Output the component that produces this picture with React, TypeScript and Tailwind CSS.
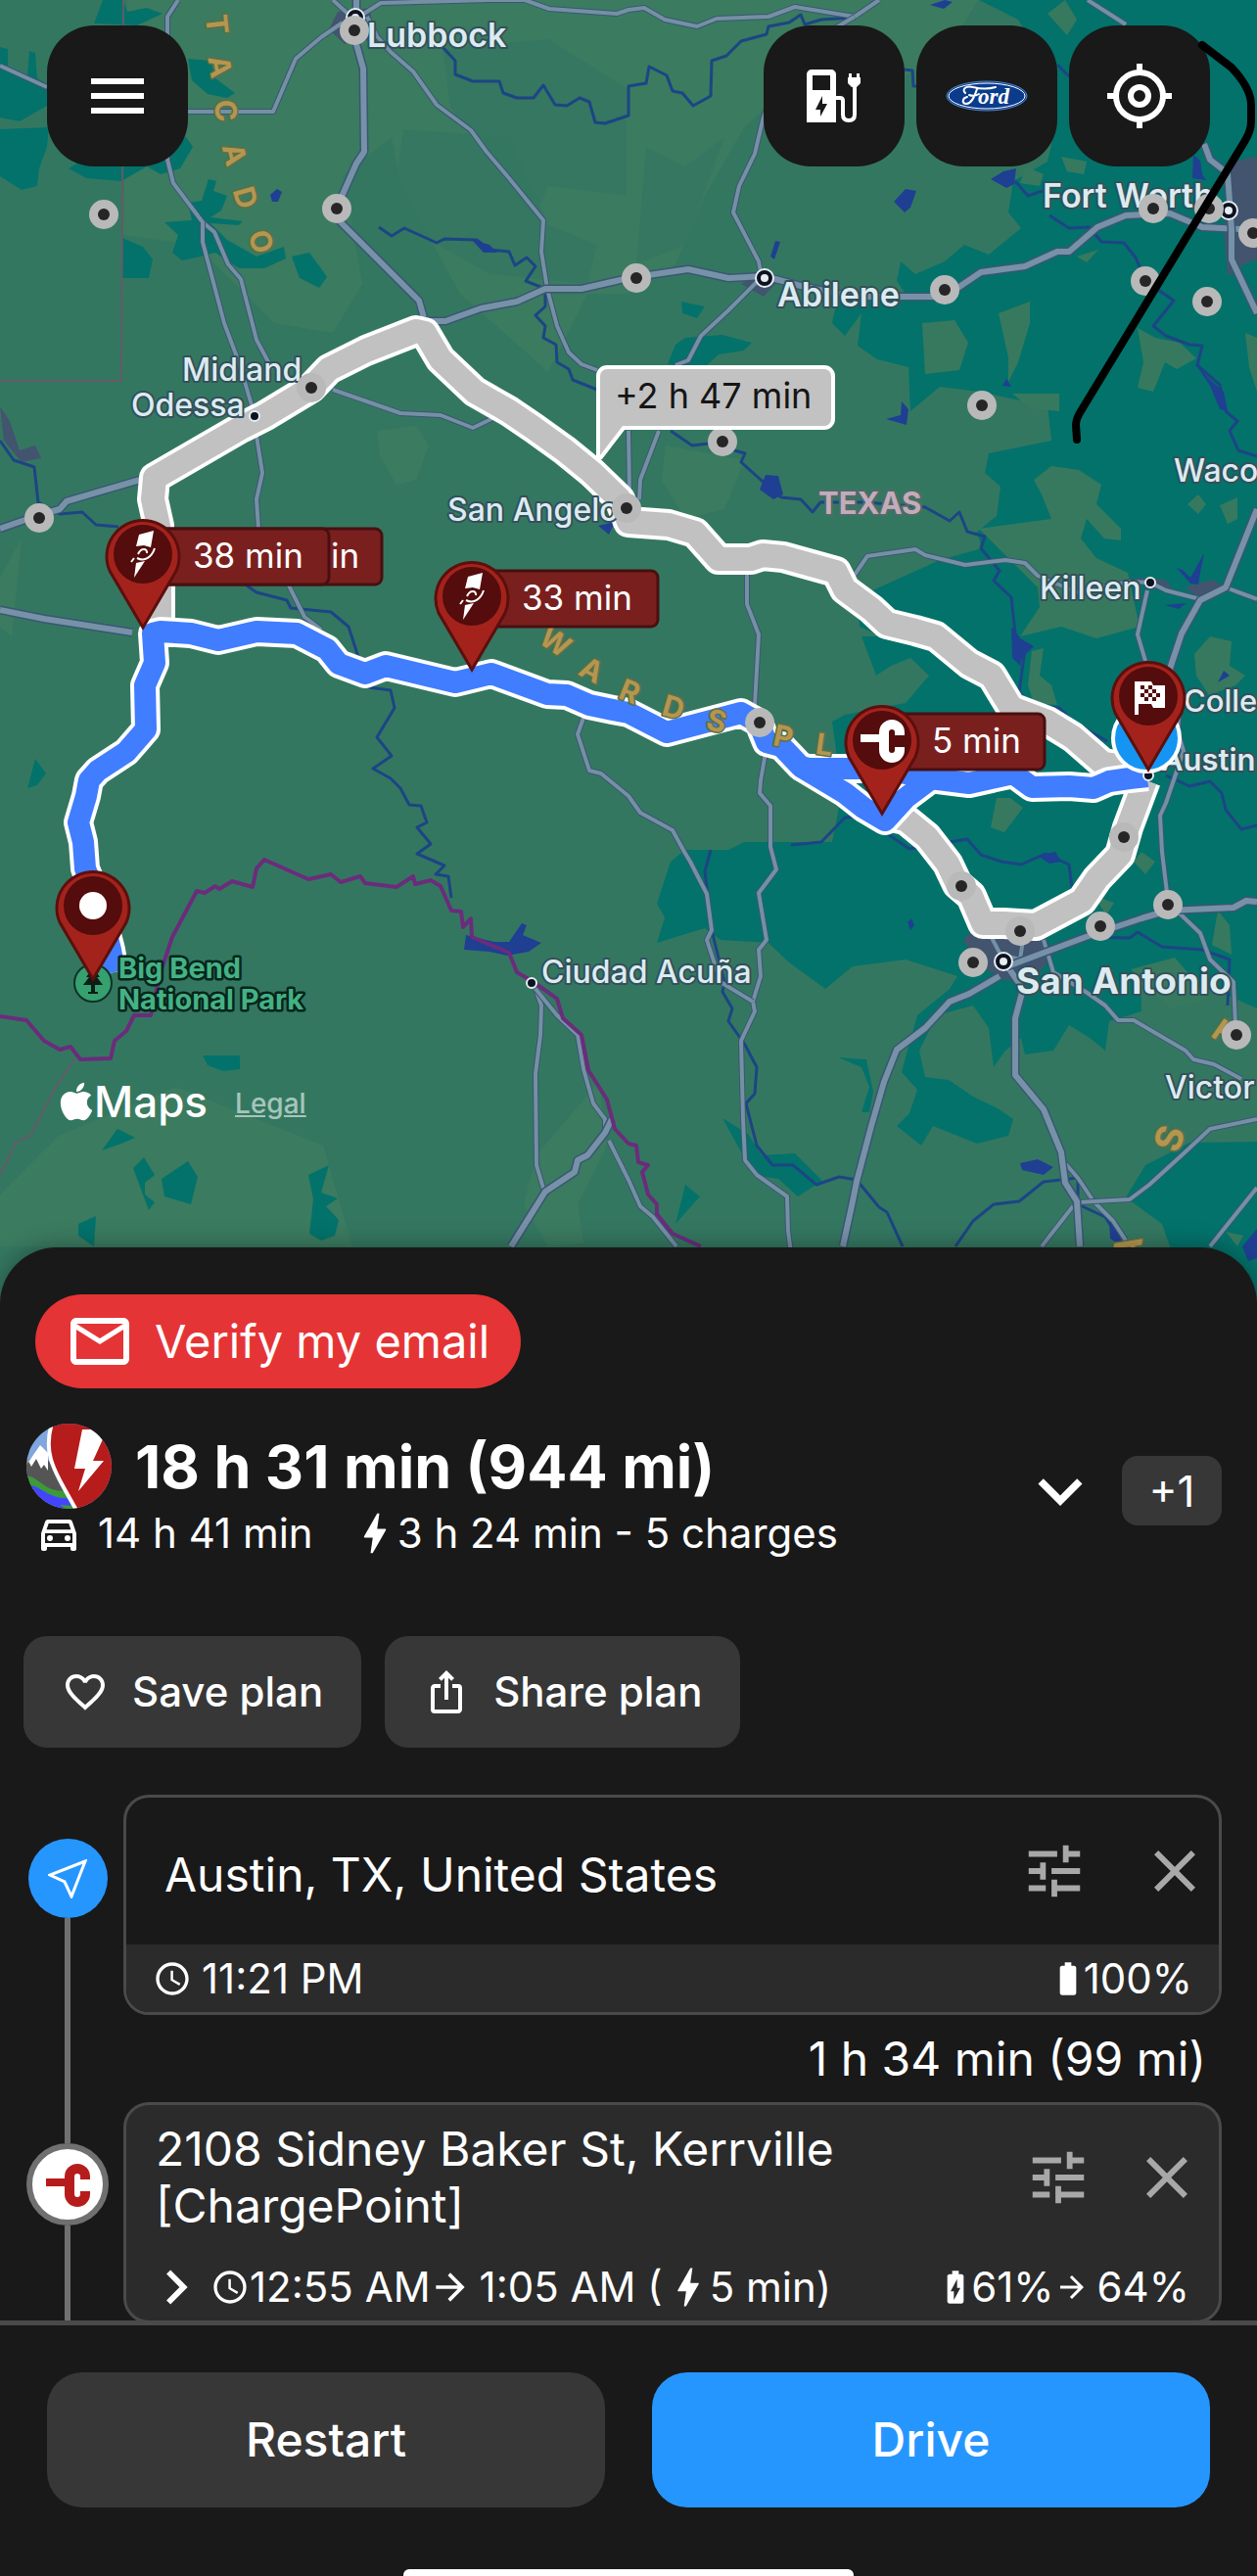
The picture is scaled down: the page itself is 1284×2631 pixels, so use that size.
import type { ReactNode } from "react";
import {
  MdArrowForward,
  MdBatteryChargingFull,
  MdBatteryFull,
  MdBolt,
  MdChevronRight,
  MdClose,
  MdExpandMore,
  MdFavoriteBorder,
  MdIosShare,
  MdMailOutline,
  MdMenu,
  MdOutlineDirectionsCar,
  MdSchedule,
  MdTune,
} from "react-icons/md";
import { FaApple } from "react-icons/fa";

/* ---------- Map data ---------- */

const lightLand = [
  "130,0 1000,0 960,60 900,90 840,60 760,130 720,200 690,270 640,300 600,300 560,380 470,300 410,190 400,140 350,180 370,290 340,340 280,330 200,250 126,240",
  "385,440 425,435 438,455 425,490 405,495 388,465",
  "680,455 760,470 740,520 700,530 676,490",
  "0,590 22,550 12,650 0,640",
  "548,1180 612,1105 620,1170 590,1230 596,1270 560,1273 535,1230",
  "60,1160 180,1110 330,1170 360,1273 0,1273 0,1220",
];

const darkLand = [
  "452,50 560,40 640,90 640,200 560,190 545,225 500,160 460,110",
  "412,132 520,140 560,230 610,250 600,290 500,280 430,240 405,180",
  "660,150 700,170 740,140 700,250 650,270",
  "800,175 1000,190 960,280 830,290 790,230",
];

const teal = [
  "1000,0 1284,0 1284,1030 1240,1010 1195,1020 1165,1000 1166,1033 1133,1043 1129,1073 1113,1060 1092,1047 1076,1073 1047,1077 1043,1060 1027,1073 1015,1090 1010,1050 994,1027 957,1037 939,1073 945,1100 969,1103 994,1120 1019,1132 1035,1143 1030,1160 998,1168 953,1150 941,1170 916,1150 929,1137 937,1113 921,1095 925,1080 937,1037 970,1010 978,997 925,980 871,987 843,1010 806,983 785,963 736,960 720,948 671,963 679,937 671,923 685,880 700,868 744,868 760,860 850,860 860,810 850,737 863,730 925,718 949,690 930,672 910,680 895,690 880,650 900,650 878,640 876,610 920,590 960,572 1003,560 998,543 1018,527 1022,497 1006,483 1010,463 1074,450 1070,415 1000,400 960,395 930,420 928,375 896,367 876,353 880,320 863,343 850,330 855,307 925,300 916,287 920,267 935,280 965,267 985,250 1010,260 1043,233 1030,217 1035,185 1070,165 1078,130 1070,70 1040,20",
  "1215,1167 1170,1190 1150,1223 1187,1250 1195,1273 1195,1336 1284,1336 1284,1166",
  "126,0 130,12 150,8 166,14 140,26 96,24 105,0",
  "0,48 8,50 8,72 28,78 30,52 36,54 38,80 48,86 48,108 20,124 0,120",
  "0,132 50,130 48,150 40,172 38,190 22,194 0,180",
  "192,60 215,62 220,80 240,95 232,100 212,96 196,82",
  "190,140 197,150 184,172 164,178 150,170 124,185 88,182 70,172 90,160 124,165",
  "168,227 196,225 192,207 206,205 213,183 221,185 218,195 232,200 226,215 215,222 248,226 244,230 215,228 232,245 262,262 290,252 292,264 270,274 244,274 220,258 196,264 186,266 176,258 182,240",
  "125,243 146,252 156,265 152,284 125,284",
  "298,262 316,258 330,277 334,283 326,294 306,284",
  "28,805 36,775 47,790 38,802",
  "207,1078 245,1078 245,1092 228,1094 212,1088",
  "104,1175 120,1153 138,1162 124,1168",
  "136,1193 147,1182 158,1200 148,1208 148,1220 158,1228 152,1236",
  "165,1204 192,1186 202,1202 195,1230 168,1222",
  "315,1200 336,1190 332,1204 328,1218 345,1224 333,1232 346,1246 342,1262 328,1267 316,1260 320,1225",
  "80,1250 98,1242 96,1273 80,1262",
  "856,1080 885,1082 892,1115 888,1136 880,1136 888,1110 880,1090",
  "738,1142 764,1158 778,1180 812,1178 840,1206 815,1222 795,1204 770,1200",
  "700,1210 715,1222 690,1250",
  "696,308 720,313 712,325 697,320",
  "700,345 738,342 768,350 760,358 734,362 720,375 682,372 690,352",
];

const patches = [
  "942,330 975,327 989,350 980,378 945,382",
  "1020,320 1052,308 1052,330 1040,370 1030,390 1030,365",
  "1088,0 1100,20 1090,36 1070,14",
  "1048,170 1066,178 1062,190 1042,187",
  "1084,160 1110,165 1107,178 1090,175",
  "1100,262 1122,255 1110,268",
  "1162,335 1180,345 1205,350 1222,366 1202,377 1190,370 1178,400 1162,396 1168,370",
  "1034,402 1082,402 1082,420 1052,417",
  "1074,476 1102,480 1125,495 1120,515 1145,540 1145,552 1128,550 1110,530 1104,550 1120,570 1152,585 1164,640 1120,652 1084,640 1042,650 1062,620 1060,600 1030,570 1000,540 1074,530 1064,505 1056,490",
  "1213,515 1224,505 1232,515 1224,525",
  "1246,516 1264,508 1264,530 1254,535",
  "1054,665 1066,662 1062,690 1074,700 1080,720 1056,718 1050,700",
  "1220,668 1236,650 1258,655 1256,680 1272,690 1262,700 1235,710 1222,690",
  "1018,815 1032,815 1045,825 1026,850 1012,845",
  "1166,870 1180,880 1170,893 1158,880",
  "1118,915 1138,922 1130,935",
  "1244,930 1256,945 1258,975 1238,965",
  "1272,340 1284,345 1284,400 1276,375",
  "1155,990 1200,978 1236,1020 1195,1030",
  "1252,1258 1270,1262 1264,1273",
];

const urban = [
  "1256,165 1284,160 1284,265 1270,270 1262,280 1254,280 1250,235",
  "984,960 998,945 1066,953 1076,975 1052,1005 1024,1000 1000,985",
  "345,12 378,8 382,40 352,45 336,30",
  "757,290 781,278 792,290 780,303",
  "0,415 10,430 20,460 36,455 42,468 22,472 4,450",
  "1210,600 1238,592 1252,600 1232,615",
  "1160,590 1190,592 1198,602 1172,602",
];

const lakes = [
  "276,199 283,193 288,196 284,206 278,206",
  "482,245 500,250 508,258 494,258",
  "913,206 925,193 936,195 930,212 924,217",
  "787,262 792,246 797,247 791,265",
  "1012,183 1025,175 1038,172 1036,188 1028,192",
  "1219,158 1226,164 1228,178 1232,184 1218,182",
  "905,428 920,424 921,410 928,418 926,434",
  "1024,394 1028,387 1033,395",
  "950,5 965,0 973,2 964,9",
  "776,500 782,485 795,486 800,505 790,510",
  "1033,640 1042,652 1056,660 1044,672 1042,680 1034,672",
  "1202,580 1208,582 1216,590 1230,565 1226,585 1224,597 1216,596",
  "1190,618 1212,616 1204,622",
  "1244,697 1250,685 1256,690",
  "474,970 476,955 505,962 520,962 533,943 538,945 534,955 553,963 540,972 518,976 500,972",
  "1042,1188 1060,1184 1076,1192 1066,1200 1044,1195",
  "927,942 931,938 934,945 930,950",
  "1060,874 1078,870 1084,880 1072,882",
  "611,537 628,533 622,546",
  "1133,1243 1142,1250 1146,1273 1134,1265",
  "1220,370 1236,388 1250,400 1254,420 1246,418 1236,394",
  "1269,1273 1284,1255 1284,1285 1275,1288",
];

const rivers = [
  "452,48 465,62 465,76 483,83 510,83 514,95 528,100 545,100 555,87 567,107 579,108 592,100 602,104 608,125 618,126 642,118 642,88 660,85 663,68 681,77 687,93 697,95 708,108 726,98 727,62 742,57 757,42 783,35 785,27 806,23 818,15 822,25 839,20 871,18",
  "387,232 400,241 413,233 446,248 454,244 487,245 500,255 520,257 526,271 538,263 547,272 537,287 557,295 557,313 547,322 557,333 555,345 568,352 569,370 581,377 585,388 610,398",
  "685,440 707,455 724,453 761,463 757,472 777,490 798,508 818,510 830,523 838,513 884,513 945,518 970,532 980,523 988,543 1006,548 1002,560 1021,583 1015,593 1033,610 1037,647 1047,663 1041,707 1051,720 1082,723 1096,737 1113,747 1131,757",
  "1191,792 1215,803 1236,798 1248,810 1252,827 1268,847 1284,843",
  "1072,220 1092,233 1113,232 1125,247 1148,248 1160,263 1170,287 1199,307 1178,333 1191,343 1215,352 1228,353 1223,373 1246,393 1252,420 1264,430 1256,440 1265,460 1284,466",
  "0,450 14,470 35,477 39,513 61,525 84,523 98,536 121,538",
  "252,598 262,605 293,613 297,621 338,625 356,640 365,668 377,702 399,705 403,723 385,753 400,772 381,785 399,795 409,805 418,822 430,823 436,840 426,845 440,862 426,872 454,884 445,893 458,895 461,917",
  "726,868 720,890 727,950 740,1003 738,1013 748,1030 744,1043 761,1067 773,1090 771,1117 762,1127 773,1170 789,1190 810,1190 834,1210 857,1202 875,1205 898,1233 906,1238 922,1273",
  "976,1273 994,1247 1015,1230 1041,1227 1066,1207 1101,1203 1101,1230 1129,1243 1146,1270",
  "904,850 929,867 988,857 1002,873 1023,880 1043,883 1068,872 1092,883 1095,907",
  "1109,957 1154,958 1162,952 1187,967 1228,970 1256,980 1254,1027",
  "808,863 839,860 863,835 888,833",
  "924,71 932,72 933,88 940,88",
  "1080,66 1092,78",
  "1037,185 1050,200 1080,190",
];

const majorRoads = [
  "364,0 364,45 371,70 372,155 364,167 348,203 348,227 428,307 434,328",
  "434,328 455,328 491,315 528,308 557,295 594,295 642,284 703,275 744,284 781,282 818,292 871,303 965,303 1002,278 1047,272 1080,257 1092,257 1121,232 1150,220 1195,218 1228,232 1284,235",
  "1284,520 1252,600 1226,613 1207,647 1195,683 1205,720",
  "1021,997 990,1015 970,1023 945,1050 916,1072 903,1105 890,1150 875,1207 871,1227 861,1273",
  "1029,987 1045,1010 1037,1040 1037,1098 1066,1133 1084,1177 1088,1208 1100,1227 1103,1273",
  "1029,987 1109,957 1166,938 1193,930 1260,927 1273,920 1284,921",
  "0,540 37,527 61,520 68,512 143,490",
  "0,623 45,632 135,646",
  "625,1143 618,1157 600,1180 590,1185 587,1197 557,1217 522,1273",
  "1230,147 1236,163 1254,177 1258,235 1258,265 1284,320",
];

const minorRoads = [
  "182,0 171,17 171,163 177,187 207,227 219,237 233,270 246,285 262,347 278,377",
  "207,227 207,247 229,330 244,370 258,417",
  "192,114 279,114 302,60 328,38 350,23",
  "0,67 48,89",
  "375,17 385,37 399,53 422,73 446,107 481,133 497,155 520,182 555,225 553,257 559,295 569,333 581,360 594,372 610,378",
  "340,0 362,20 389,3 500,0 536,0 561,9 630,14 642,10 658,8 679,20 712,27 732,19 785,17 812,7 873,17 898,0",
  "873,17 800,60 779,123 771,157 755,190 749,217 775,267 778,283 744,317 716,343 703,368 690,373",
  "1111,0 1150,25",
  "1205,720 1203,747 1209,767 1191,820 1185,833 1187,870 1193,920",
  "1226,612 1191,603 1175,595 1154,594 1100,605 1060,588 1047,575 1027,572 986,577 945,567 935,561 886,568 873,587",
  "1172,603 1162,648 1170,675",
  "1252,600 1284,612",
  "763,585 763,617 775,648 771,720 783,763 777,797 776,810 787,823 787,865 793,888 775,912 783,960 775,970 777,997 769,1023 771,1033 757,1063 759,1143 761,1185 773,1200 804,1222 805,1257 808,1280",
  "596,733 590,750 602,787 614,790 642,813 654,830 687,848 699,870 705,880 722,913 727,950 722,960 736,1003 769,1023",
  "1088,1188 1101,1203 1117,1227 1137,1247 1150,1267",
  "1101,1228 1154,1225 1174,1210 1207,1180 1236,1153 1284,1143",
  "1096,1232 1064,1273",
  "1284,1213 1236,1273",
  "1205,933 1226,953 1236,980 1260,1003 1262,1047",
  "1066,960 1076,993 1109,1013 1129,1027 1142,1042 1158,1042 1211,1073 1219,1082 1240,1087 1268,1102",
  "262,445 268,483 262,510 264,540 295,598 311,630 328,643",
  "340,398 389,415 409,422 450,424 483,437 508,425",
  "642,440 643,505",
  "673,440 654,490 653,510",
  "547,1010 553,1027 552,1057 547,1097 548,1190 556,1217",
  "547,1010 569,1037 590,1057 596,1092 606,1127 618,1143 618,1157",
  "622,1165 642,1205 654,1232 667,1243 691,1273",
  "1009,950 1022,975 1042,980 1045,960",
];

const nationalBorder =
  "0,1038 27,1042 45,1063 61,1072 72,1069 82,1082 113,1081 117,1063 129,1053 137,1037 154,1037 164,993 176,957 201,910 209,912 220,905 224,908 237,900 258,906 262,887 270,878 315,898 338,893 348,901 368,895 373,902 405,906 422,895 424,903 440,899 450,905 461,930 471,931 473,947 481,938 482,957 520,973 528,993 545,1003 569,1020 575,1040 594,1057 601,1093 620,1123 628,1153 642,1168 650,1170 652,1187 662,1190 656,1197 662,1220 671,1230 671,1240 687,1260 716,1273";

const altRoutes = [
  "163,640 163,600 162,537 156,510 158,488 246,437 270,425 318,396 336,377 374,358 425,338 434,340 450,367 485,400 520,420 545,437 577,460 604,482 633,510 642,533 683,536 710,544 734,571 767,571 779,567 800,569 854,584 863,602 890,622 906,637 935,644 956,650 990,678 1013,690 1033,723 1070,737 1096,753 1127,780 1170,786",
  "901,832 925,837 947,855 968,882 978,903 992,915 1004,943 1025,943 1058,945 1105,920 1121,897 1144,873 1152,845 1170,797",
];

const mainRoutes = [
  "117,993 113,970 100,920 87,887 85,860 80,840 88,813 91,797 100,787 129,768 149,745 148,700 158,677 156,647 164,645 195,647 223,654 262,645 303,647 334,663 346,678 373,688 394,680 465,697 502,688 559,709 579,710 602,720 626,725 642,728 681,748 757,728 775,738 783,758 798,762 818,783 826,785 900,785 950,795 990,800 1035,790 1054,804 1092,803 1117,805 1133,798 1154,795 1172,793",
  "818,783 863,810 882,825 904,838 925,815 949,797",
];

const chargers: [number, number][] = [
  [362, 31], [106, 219], [344, 213], [318, 396], [650, 284], [965, 296], [1178, 213], [1235, 213],
  [1280, 238], [1170, 287], [1233, 308], [1003, 414], [738, 451], [40, 529], [640, 519], [776, 738],
  [1148, 855], [982, 905], [1042, 951], [994, 983], [1124, 946], [1193, 924], [1263, 1057],
];

const townDots: [number, number][] = [[260, 425], [1175, 595], [543, 1004], [1173, 792]];
const cityDots: [number, number][] = [[363, 18], [781, 284], [1255, 215], [1025, 982]];

const placeNames: { name: string; x: number; y: number; size: number; weight: number }[] = [
  { name: "Lubbock", x: 375, y: 48, size: 34, weight: 600 },
  { name: "Midland", x: 186, y: 389, size: 32, weight: 500 },
  { name: "Odessa", x: 134, y: 425, size: 32, weight: 500 },
  { name: "Abilene", x: 794, y: 313, size: 34, weight: 600 },
  { name: "Fort Worth", x: 1065, y: 212, size: 34, weight: 600 },
  { name: "Waco", x: 1199, y: 492, size: 32, weight: 500 },
  { name: "Killeen", x: 1062, y: 612, size: 32, weight: 500 },
  { name: "Colle", x: 1209, y: 727, size: 31, weight: 500 },
  { name: "Austin", x: 1186, y: 787, size: 31, weight: 600 },
  { name: "San Angelo", x: 457, y: 532, size: 32, weight: 500 },
  { name: "Ciudad Acuña", x: 553, y: 1004, size: 32, weight: 500 },
  { name: "San Antonio", x: 1038, y: 1015, size: 37, weight: 700 },
  { name: "Victor", x: 1190, y: 1122, size: 32, weight: 500 },
];

const regionLetters: [string, number, number, number][] = [
  ["T", 221, 25, 84], ["A", 224, 68, 80], ["C", 230, 113, 82], ["A", 239, 158, 76], ["D", 250, 202, 74], ["O", 266, 247, 72],
  ["W", 567, 656, 34], ["A", 604, 685, 28], ["R", 643, 707, 22], ["D", 688, 723, 16], ["S", 732, 737, 14], ["P", 800, 753, 12], ["L", 842, 761, 8],
];

const coastLetters: [string, number, number, number][] = [
  ["S", 1195, 1163, -72], ["T", 1256, 1058, -55], ["A", 1152, 1276, -80],
];

/* ---------- Map parts ---------- */

function ChargePointMark({ color }: { color: string }) {
  return (
    <g fill="none" stroke={color}>
      <path strokeWidth="8" d="M-22-2H-2" />
      <path strokeWidth="10" d="M18-5V-8A8 8 0 0 0 2-8V10A8 8 0 0 0 18 10V7" />
    </g>
  );
}

function ChargerBolt() {
  return (
    <g fill="#fff">
      <path d="M-4-20 11-24 8-7 1-9-7-8Z" />
      <path d="M-7 9 2 7-9 24Z" />
      <path fill="none" stroke="#fff" strokeWidth="2" d="M-9 4-12 8M-5 0C-2-7 5-6 4-1M-6 4C2 8 9 3 12-6" />
    </g>
  );
}

function Pin({ x, y, children }: { x: number; y: number; children: ReactNode }) {
  return (
    <g transform={`translate(${x} ${y})`}>
      <path fill="#a3231c" stroke="#5c0f0d" strokeWidth="3" d="M0 75-34 17A37 37 0 1 1 34 17Z" />
      <circle r="30" fill="#540c0c" />
      {children}
    </g>
  );
}

function TimeTag({ x, y, width, label, labelX }: { x: number; y: number; width: number; label: string; labelX: number }) {
  return (
    <g>
      <rect x={x} y={y} width={width} height="57" rx="7" fill="#79201f" stroke="#490f10" strokeWidth="3" />
      <text x={labelX} y={y + 40} fontSize="35" fill="#fff">
        {label}
      </text>
    </g>
  );
}

function RouteMap() {
  return (
    <svg
      className="absolute inset-0 h-full w-full font-[Inter,sans-serif]"
      viewBox="0 0 1284 1336"
      preserveAspectRatio="xMidYMin slice"
      role="img"
      aria-label="Route map from Austin to Big Bend National Park"
    >
      <rect width="1284" height="1336" fill="#347761" />
      {lightLand.map((p) => (
        <polygon key={p} points={p} fill="#3f7d60" opacity="0.7" />
      ))}
      {darkLand.map((p) => (
        <polygon key={p} points={p} fill="#347761" opacity="0.8" />
      ))}
      {teal.map((p) => (
        <polygon key={p} points={p} fill="#03726b" />
      ))}
      {patches.map((p) => (
        <polygon key={p} points={p} fill="#37795f" />
      ))}
      {urban.map((p) => (
        <polygon key={p} points={p} fill="#43546f" />
      ))}
      <g fill="none" stroke="#1c4585" strokeWidth="3" strokeLinejoin="round">
        {rivers.map((p) => (
          <polyline key={p} points={p} />
        ))}
      </g>
      {lakes.map((p) => (
        <polygon key={p} points={p} fill="#1f3f92" />
      ))}
      <polyline points="126,0 124,389 0,389" fill="none" stroke="#655a67" strokeWidth="2" />
      <polyline points="76,1082 57,1110 31,1160 16,1167 0,1200" fill="none" stroke="#655a67" strokeWidth="2" />
      <g fill="none" strokeLinejoin="round">
        {minorRoads.map((p) => (
          <g key={p}>
            <polyline points={p} stroke="#3a5676" strokeWidth="6" />
            <polyline points={p} stroke="#7590a3" strokeWidth="4" />
          </g>
        ))}
        {majorRoads.map((p) => (
          <g key={p}>
            <polyline points={p} stroke="#3a5676" strokeWidth="9" />
            <polyline points={p} stroke="#7791a6" strokeWidth="6" />
          </g>
        ))}
        <polyline points={nationalBorder} stroke="#6b2c7c" strokeWidth="4" />
      </g>

      <g fill="none" strokeLinejoin="round">
        {altRoutes.map((p) => (
          <polyline key={p} points={p} stroke="#fff" strokeWidth="32" />
        ))}
        {altRoutes.map((p) => (
          <polyline key={p} points={p} stroke="#c1c1c1" strokeWidth="24" />
        ))}
        {mainRoutes.map((p) => (
          <polyline key={p} points={p} stroke="#fff" strokeWidth="30" />
        ))}
        {mainRoutes.map((p) => (
          <polyline key={p} points={p} stroke="#407dff" strokeWidth="22" />
        ))}
      </g>

      <g fontWeight="700" fill="#b5964f" textAnchor="middle" stroke="#5d6f47" strokeWidth="3" strokeLinejoin="round" paintOrder="stroke">
        {regionLetters.map(([letter, x, y, angle]) => (
          <text key={`${letter}${x}`} x="0" y="10" fontSize="30" transform={`translate(${x} ${y}) rotate(${angle})`}>
            {letter}
          </text>
        ))}
        {coastLetters.map(([letter, x, y, angle]) => (
          <text key={`${letter}${x}`} x="0" y="13" fontSize="38" transform={`translate(${x} ${y}) rotate(${angle})`}>
            {letter}
          </text>
        ))}
      </g>

      {cityDots.map(([x, y]) => (
        <g key={`${x}-${y}`}>
          <circle cx={x} cy={y} r="9" fill="#0c1220" stroke="#e6ecf0" strokeWidth="2" />
          <circle cx={x} cy={y} r="4" fill="#e6ecf0" />
        </g>
      ))}
      {townDots.map(([x, y]) => (
        <circle key={`${x}-${y}`} cx={x} cy={y} r="5" fill="#0c1220" stroke="#e6ecf0" strokeWidth="2" />
      ))}

      <g stroke="#33505a" strokeWidth="4" strokeLinejoin="round" paintOrder="stroke" fill="#dcebf0">
        {placeNames.map((p) => (
          <text key={p.name} x={p.x} y={p.y} fontSize={p.size} fontWeight={p.weight}>
            {p.name}
          </text>
        ))}
        <text x="836" y="525" fontSize="31" fontWeight="700" fill="#c3abbb" stroke="#4f6c66">
          TEXAS
        </text>
      </g>

      {chargers.map(([x, y]) => (
        <g key={`${x}-${y}`}>
          <circle cx={x} cy={y} r="15" fill="#b9b9b9" />
          <circle cx={x} cy={y} r="6" fill="#262626" />
        </g>
      ))}

      <circle cx="95" cy="1004" r="19" fill="#36a06f" stroke="#0e3327" strokeWidth="2" />
      <path fill="#0b1d16" d="M95 988 102 998H99L105 1006H97V1013H100V1015H90V1013H93V1006H85L91 998H88Z" />
      <g fontSize="29" fontWeight="700" fill="#45b184" stroke="#06251c" strokeWidth="5" strokeLinejoin="round" paintOrder="stroke">
        <text x="121" y="999">Big Bend</text>
        <text x="121" y="1031">National Park</text>
      </g>

      <path
        d="M620 375H842A9 9 0 0 1 851 384V428A9 9 0 0 1 842 437H637L614 467 611 468V384A9 9 0 0 1 620 375Z"
        fill="#c2c2c2"
        stroke="#fff"
        strokeWidth="4"
      />
      <text x="628" y="417" fontSize="36" fill="#151515">
        +2 h 47 min
      </text>

      <circle cx="1171" cy="754" r="34" fill="#1595f3" stroke="#fff" strokeWidth="4" />

      <TimeTag x={160} y={540} width={230} label="in" labelX={338} />
      <TimeTag x={150} y={540} width={186} label="38 min" labelX={197} />
      <Pin x={146} y={566}>
        <ChargerBolt />
      </Pin>
      <TimeTag x={486} y={583} width={186} label="33 min" labelX={533} />
      <Pin x={482} y={609}>
        <ChargerBolt />
      </Pin>
      <TimeTag x={905} y={729} width={162} label="5 min" labelX={952} />
      <Pin x={901} y={756}>
        <ChargePointMark color="#fff" />
      </Pin>
      <Pin x={1173} y={711}>
        <path fill="#fff" d="M-14-15H3L5-11H17V12H5L3 8H-10V19H-14Z" />
        <path
          fill="#540c0c"
          d="M-8-11h4v4h-4zM0-11h4v4h-4zM-4-7h4v4h-4zM4-7h4v4h-4zM-8-3h4v4h-4zM0-3h4v4h-4zM8-3h4v4h-4zM4 1h4v4h-4zM-4 1h4v4h-4z"
        />
      </Pin>
      <Pin x={95} y={925}>
        <circle r="14" fill="#fff" />
      </Pin>
    </svg>
  );
}

/* ---------- Icons ---------- */

function ChargingStationIcon() {
  return (
    <svg viewBox="0 0 56 56" className="size-14" aria-hidden="true">
      <path
        fill="#fff"
        fillRule="evenodd"
        d="M5 1H25A5 5 0 0 1 30 6V55H0V6A5 5 0 0 1 5 1ZM6 7V22H24V7ZM16 28 9 42H14V49L21 36H16Z"
      />
      <path fill="none" stroke="#fff" strokeWidth="4" d="M29 30H34Q37 30 37 33V47Q37 53 43 53T49 47V16" />
      <path fill="#fff" d="M43 5H46V9H51V5H54V9H55V15L51 19H46L42 15V9H43Z" />
    </svg>
  );
}

function LocateIcon() {
  return (
    <svg viewBox="0 0 66 66" className="size-[66px]" fill="none" stroke="#fff" aria-hidden="true">
      <circle cx="33" cy="33" r="24" strokeWidth="6" />
      <circle cx="33" cy="33" r="9" strokeWidth="6" />
      <path strokeWidth="6" d="M33 0V9M33 57V66M0 33H9M57 33H66" />
    </svg>
  );
}

function FordBadge() {
  return (
    <svg viewBox="0 0 84 32" className="h-8 w-21" aria-hidden="true">
      <ellipse cx="42" cy="16" rx="41" ry="15" fill="#0b3c8c" stroke="#4f86c9" strokeWidth="1" />
      <ellipse cx="42" cy="16" rx="39" ry="13" fill="#0b3c8c" stroke="#fff" strokeWidth="1" />
      <path
        fill="none"
        stroke="#fff"
        strokeWidth="2"
        strokeLinecap="round"
        d="M20 13C16 9 21 5 28 7C36 9 44 9 51 7M32 9C30 15 27 24 21 24C16 24 17 18 22 17M24 15Q29 17 34 14"
      />
      <text x="33" y="24" fontSize="23" fontStyle="italic" fontWeight="700" fill="#fff" className="font-['Liberation_Serif',serif]">
        ord
      </text>
    </svg>
  );
}

function PlannerLogo() {
  return (
    <svg viewBox="0 0 87 87" className="size-[87px] shrink-0 rounded-full" aria-hidden="true">
      <rect width="87" height="87" fill="#7fa6de" />
      <path fill="#555" d="M0 40 14 26 24 40 50 87H0Z" />
      <path fill="#fff" d="M0 42 14 22 22 30V48L18 42 15 46 10 36 5 44 2 38Z" />
      <path fill="#3c9a3a" d="M0 53C14 55 20 72 42 68L52 87H0Z" />
      <path fill="#4444ff" d="M0 63C16 62 20 78 46 76L52 84 34 83 40 87H0Z" />
      <path fill="#b71c1c" stroke="#fff" strokeWidth="4" d="M27-4C16 30 26 44 52 90L100 90V-4Z" />
      <path fill="#fff" d="M57 6H70L78 16 68 38H79L53 69 60 46H49Z" />
    </svg>
  );
}

function NavigationIcon() {
  return (
    <svg viewBox="0 0 40 40" className="size-10" fill="none" stroke="#fff" strokeWidth="3" aria-hidden="true">
      <path d="M38 2 2 16 17 23 24 38Z" />
    </svg>
  );
}

/* ---------- Sheet parts ---------- */

function MapButton({ label, children }: { label: string; children: ReactNode }) {
  return (
    <button
      type="button"
      aria-label={label}
      className="flex size-36 items-center justify-center rounded-[48px] bg-[#191919] text-white"
    >
      {children}
    </button>
  );
}

function StopActions({ name }: { name: string }) {
  return (
    <>
      <button type="button" aria-label={`Settings for ${name}`}>
        <MdTune className="size-[70px]" />
      </button>
      <button type="button" aria-label={`Remove ${name}`}>
        <MdClose className="size-[72px]" />
      </button>
    </>
  );
}

export default function App() {
  return (
    <main className="flex min-h-screen flex-col bg-[#191919] font-[Inter,sans-serif] text-white">
      <section className="relative h-[1336px] overflow-hidden">
        <RouteMap />
        <header className="relative flex items-start justify-between px-12 pt-[26px]">
          <MapButton label="Menu">
            <MdMenu className="size-[72px]" />
          </MapButton>
          <div className="flex gap-3">
            <MapButton label="Charging stations">
              <ChargingStationIcon />
            </MapButton>
            <MapButton label="Ford vehicle">
              <FordBadge />
            </MapButton>
            <MapButton label="My location">
              <LocateIcon />
            </MapButton>
          </div>
        </header>
        <svg
          className="pointer-events-none absolute inset-0 h-full w-full"
          viewBox="0 0 1284 1336"
          preserveAspectRatio="xMidYMin slice"
          aria-hidden="true"
        >
          <path
            fill="none"
            stroke="#000"
            strokeWidth="8"
            strokeLinecap="round"
            strokeLinejoin="round"
            d="M1228 46 1258 69Q1278 90 1278 107V124Q1278 134 1271 145L1104 420Q1099 428 1099 434L1100 449"
          />
        </svg>
        <div className="absolute top-[1095px] left-14 flex items-center">
          <FaApple className="-mr-1 size-11" />
          <span className="text-[44px] leading-[56px] font-medium">Maps</span>
          <a href="#legal" className="ml-7 pt-1 text-[28px] leading-[56px] font-medium text-[#a5c6bb] underline">
            Legal
          </a>
        </div>
      </section>

      <section className="relative -mt-[62px] rounded-t-[58px] bg-[#191919] pt-12 shadow-[0_0_24px_rgba(0,0,0,0.35)]">
        <button
          type="button"
          className="ml-9 flex h-24 items-center gap-5 rounded-full bg-[#e53435] pr-8 pl-[30px] text-[47px] leading-[58px]"
        >
          <MdMailOutline className="size-[72px]" />
          Verify my email
        </button>

        <div className="mt-9 flex items-center justify-between pr-9 pl-[27px]">
          <div>
            <div className="flex items-center gap-6">
              <PlannerLogo />
              <h1 className="text-[61px] leading-[72px] font-bold">18 h 31 min (944 mi)</h1>
            </div>
            <div className="flex items-center pl-[9px] text-[42px] leading-[50px]">
              <MdOutlineDirectionsCar className="size-12" />
              <span className="ml-4">14 h 41 min</span>
              <MdBolt className="-mr-1 -my-1 ml-9 size-[54px]" />
              <span>3 h 24 min - 5 charges</span>
            </div>
          </div>
          <div className="flex items-center gap-[18px]">
            <button type="button" aria-label="Show plan details">
              <MdExpandMore className="size-[90px]" />
            </button>
            <button type="button" className="h-[71px] w-[102px] rounded-2xl bg-[#373737] text-[44px] leading-[50px]">
              +1
            </button>
          </div>
        </div>

        <div className="mt-20 flex gap-6 pl-6 text-[42px] leading-[50px] font-medium">
          <button type="button" className="flex h-[114px] items-center gap-6 rounded-3xl bg-[#373737] px-[39px]">
            <MdFavoriteBorder className="size-12" />
            Save plan
          </button>
          <button type="button" className="flex h-[114px] items-center gap-6 rounded-3xl bg-[#373737] px-[39px]">
            <MdIosShare className="size-12" />
            Share plan
          </button>
        </div>

        <ol className="mt-12 pr-9 pl-3">
          <li className="flex">
            <div className="flex w-[114px] shrink-0 flex-col items-center pt-[45px]">
              <span className="flex size-[81px] items-center justify-center rounded-full bg-[#2696ff]">
                <NavigationIcon />
              </span>
              <span className="w-[6px] flex-1 bg-[#707070]" />
            </div>
            <div className="min-w-0 flex-1">
              <article className="overflow-hidden rounded-[26px] border-[3px] border-[#4a4a4a]">
                <div className="flex h-[150px] items-center justify-between pr-[9px] pl-[39px]">
                  <h2 className="pt-2 text-[48px] leading-[58px]">Austin, TX, United States</h2>
                  <div className="flex shrink-0 items-center gap-[52px] text-[#a8a8a8]">
                    <StopActions name="Austin" />
                  </div>
                </div>
                <div className="flex items-center justify-between bg-[#2b2b2b] pt-[10px] pr-[27px] pb-[9px] pl-[27px] text-[42px] leading-[50px]">
                  <span className="flex items-center gap-[10px]">
                    <MdSchedule className="size-10" />
                    11:21 PM
                  </span>
                  <span className="flex items-center">
                    <MdBatteryFull className="-mr-1 size-10" />
                    100%
                  </span>
                </div>
              </article>
              <p className="pt-4 pr-4 pb-[15px] text-right text-[48px] leading-[58px]">1 h 34 min (99 mi)</p>
            </div>
          </li>

          <li className="flex">
            <div className="flex w-[114px] shrink-0 flex-col items-center">
              <span className="h-[42px] w-[6px] bg-[#707070]" />
              <span className="flex size-[84px] items-center justify-center rounded-full border-[6px] border-[#707070] bg-white">
                <svg viewBox="-25 -25 50 50" className="size-[50px]" aria-label="ChargePoint" role="img">
                  <ChargePointMark color="#b71c1c" />
                </svg>
              </span>
              <span className="w-[6px] flex-1 bg-[#707070]" />
            </div>
            <article className="min-w-0 flex-1 rounded-[26px] border-[3px] border-[#4a4a4a] bg-[#2b2b2b] pt-4 pb-[9px]">
              <div className="flex items-center justify-between pr-[17px] pl-[30px]">
                <h2 className="max-w-[760px] text-[48px] leading-[58px]">2108 Sidney Baker St, Kerrville [ChargePoint]</h2>
                <div className="flex shrink-0 items-center gap-10 text-[#a8a8a8]">
                  <StopActions name="Kerrville" />
                </div>
              </div>
              <div className="mt-[29px] flex items-center justify-between pr-[30px] pl-4 text-[42px] leading-[50px]">
                <span className="flex items-center">
                  <button type="button" aria-label="Expand stop">
                    <MdChevronRight className="-my-[10px] size-[70px]" />
                  </button>
                  <MdSchedule className="size-10" />
                  <span>12:55 AM</span>
                  <MdArrowForward className="-ml-[2px] size-11" />
                  <span className="ml-2">1:05 AM (</span>
                  <MdBolt className="-my-[2px] -mr-1 size-[52px]" />
                  <span>5 min)</span>
                </span>
                <span className="flex items-center">
                  <MdBatteryChargingFull className="-mr-1 size-10" />
                  <span>61%</span>
                  <MdArrowForward className="size-9" />
                  <span className="ml-2">64%</span>
                </span>
              </div>
            </article>
          </li>
        </ol>
      </section>

      <footer className="relative -mt-[3px] border-t-[5px] border-[#4a4a4a] bg-[#191919] px-12 pt-12">
        <div className="grid grid-cols-2 gap-12 text-[48px] leading-[58px] font-medium">
          <button type="button" className="h-[138px] rounded-[36px] bg-[#373737]">
            Restart
          </button>
          <button type="button" className="h-[138px] rounded-[36px] bg-[#2696ff]">
            Drive
          </button>
        </div>
        <div className="mx-auto mt-[63px] h-[7px] w-[460px] rounded-t-[6px] bg-white" />
      </footer>
    </main>
  );
}
